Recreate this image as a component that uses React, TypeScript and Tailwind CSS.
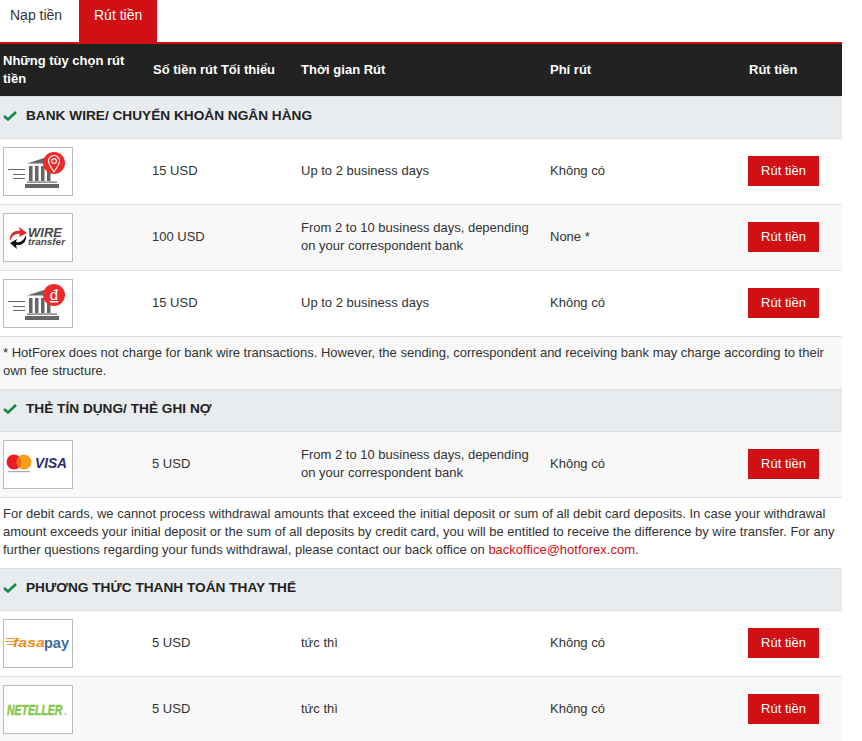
import React from "react";

const grid = "grid grid-cols-[150px_149px_249px_199px_95px] items-center";

function BankLogo({ dong }: { dong?: boolean }) {
  return (
    <svg width="68" height="47" viewBox="0 0 68 47">
      <g fill="#666">
        <rect x="4" y="21" width="17" height="1" />
        <rect x="9" y="26" width="12" height="1" />
        <rect x="9" y="30" width="12" height="1" />
        <path d="M23 15.5 L40 10 L48 15.5 Z" />
        <rect x="25" y="18" width="3.5" height="15" />
        <rect x="31" y="18" width="3.5" height="15" />
        <rect x="37" y="18" width="3.5" height="15" />
        <rect x="43" y="18" width="3.5" height="15" />
        <rect x="23" y="33.5" width="30" height="1.2" />
        <rect x="21" y="36" width="34" height="4" />
      </g>
      <circle cx="50" cy="15" r="11" fill="#ee2a2a" />
      {dong ? (
        <text x="50" y="20" textAnchor="middle" fontSize="15" fill="#fff" fontFamily="'Liberation Sans', sans-serif" textDecoration="underline">đ</text>
      ) : (
        <g fill="none" stroke="#fff" strokeWidth="1.1">
          <path d="M50 24 C47 19 44.5 16.5 44.5 13 A5.5 5.5 0 0 1 55.5 13 C55.5 16.5 53 19 50 24 Z" />
          <circle cx="50" cy="13" r="2.4" />
        </g>
      )}
    </svg>
  );
}

function WireLogo() {
  return (
    <svg width="68" height="47" viewBox="0 0 68 47">
      <path d="M6 27 C5 20 10 16 16 17 L15 13 L23 19 L15 23 L16 20 C11 19 8 22 6 27 Z" fill="#e0262b" />
      <path d="M22 21 C23 28 18 32 12 31 L13 35 L6 29 L13 25 L12 28 C17 29 20 26 22 21 Z" fill="#111" />
      <text x="24" y="23" fontSize="12.5" fontWeight="700" fontStyle="italic" fill="#4a4a4a" fontFamily="'Liberation Sans', sans-serif" textLength="34" lengthAdjust="spacingAndGlyphs">WIRE</text>
      <text x="24" y="31" fontSize="9" fontWeight="700" fontStyle="italic" fill="#4a4a4a" fontFamily="'Liberation Sans', sans-serif" textLength="37" lengthAdjust="spacingAndGlyphs">transfer</text>
    </svg>
  );
}

function VisaLogo() {
  return (
    <svg width="68" height="47" viewBox="0 0 68 47">
      <circle cx="10" cy="21" r="7.5" fill="#ea1d25" />
      <circle cx="20" cy="21" r="7.5" fill="#f79e1b" />
      <path d="M15 15.4 A7.5 7.5 0 0 1 15 26.6 A7.5 7.5 0 0 1 15 15.4 Z" fill="#f26a1f" />
      <rect x="4" y="30" width="22" height="1.2" fill="#aaa" />
      <text x="31" y="27" fontSize="14" fontWeight="700" fontStyle="italic" fill="#2b2a6b" fontFamily="'Liberation Sans', sans-serif" textLength="32" lengthAdjust="spacingAndGlyphs">VISA</text>
    </svg>
  );
}

function FasapayLogo() {
  return (
    <svg width="68" height="47" viewBox="0 0 68 47">
      <g fill="#f59a2e">
        <rect x="2" y="18" width="9" height="1" />
        <rect x="1" y="21" width="9" height="1" />
        <rect x="3" y="24" width="7" height="1" />
      </g>
      <text x="9" y="27" fontSize="12" fontWeight="700" fontStyle="italic" fill="#f08c1e" fontFamily="'Liberation Sans', sans-serif" textLength="32" lengthAdjust="spacingAndGlyphs">fasa</text>
      <text x="40" y="28" fontSize="14" fontWeight="700" fill="#3f6aa6" fontFamily="'Liberation Sans', sans-serif" textLength="25" lengthAdjust="spacingAndGlyphs">pay</text>
    </svg>
  );
}

function NetellerLogo() {
  return (
    <svg width="68" height="47" viewBox="0 0 68 47">
      <g transform="translate(3 29) scale(0.7 1)">
        <text x="0" y="0" fontSize="15" fontWeight="700" fontStyle="italic" fill="#84c94a" stroke="#84c94a" strokeWidth="0.5" fontFamily="'Liberation Sans', sans-serif">NETELLER</text>
      </g>
      <circle cx="61.5" cy="28" r="1.2" fill="#b9dfa0" />
    </svg>
  );
}

function Row({
  logo,
  min,
  time,
  fee,
  alt,
}: {
  logo: React.ReactNode;
  min: string;
  time: React.ReactNode;
  fee: string;
  alt?: boolean;
}) {
  return (
    <div className={`${grid} h-[66px] border-b border-[#ddd] ${alt ? "bg-[#f8f8f8]" : "bg-white"}`}>
      <div className="pl-[3px]">
        <div className="flex h-[49px] w-[70px] border border-[#bbb] bg-white">{logo}</div>
      </div>
      <div className="pb-[2px] pl-[2px]">{min}</div>
      <div className="pb-[2px] pl-[2px] pr-3">{time}</div>
      <div className="pb-[2px] pl-[2px]">{fee}</div>
      <div className="pb-px pl-px">
        <button className="h-[30px] w-[71px] bg-[#d11014] pb-px text-center text-[13px] text-white">Rút tiền</button>
      </div>
    </div>
  );
}

function Section({ title, first }: { title: string; first?: boolean }) {
  return (
    <div
      className={`flex items-center gap-[9px] border-b border-[#ddd] bg-[#e9ecef] pb-[4px] pl-[3px] text-[13.67px] font-bold text-[#222] ${
        first ? "h-[43px] border-t" : "h-[42px]"
      }`}
    >
      <svg width="14" height="10" viewBox="0 0 14 10">
        <path d="M1 5 L5 8.5 L13 1" fill="none" stroke="#16894a" strokeWidth="2.6" />
      </svg>
      <span>{title}</span>
    </div>
  );
}

export default function App() {
  return (
    <div className="h-[741px] w-[842px] overflow-hidden bg-white font-['Liberation_Sans',Arial,sans-serif] text-[13px] leading-[18px] text-[#333]">
      <div className="flex h-[42px] text-[14px]">
        <div className="w-[79px] pl-[10px] pt-[6px]">Nạp tiền</div>
        <div className="w-[78px] bg-[#d11014] pl-[15px] pt-[6px] text-white">Rút tiền</div>
      </div>
      <div className={`${grid} h-[54px] border-t-2 border-[#d11014] bg-[#222] font-bold text-white`}>
        <div className="pl-[3px] pr-4">Những tùy chọn rút tiền</div>
        <div className="pl-[3px]">Số tiền rút Tối thiểu</div>
        <div className="pl-[2px]">Thời gian Rút</div>
        <div className="pl-[2px]">Phí rút</div>
        <div className="pl-[2px]">Rút tiền</div>
      </div>
      <Section first title="BANK WIRE/ CHUYỂN KHOẢN NGÂN HÀNG" />
      <Row logo={<BankLogo />} min="15 USD" time="Up to 2 business days" fee="Không có" />
      <Row
        alt
        logo={<WireLogo />}
        min="100 USD"
        time="From 2 to 10 business days, depending on your correspondent bank"
        fee="None *"
      />
      <Row logo={<BankLogo dong />} min="15 USD" time="Up to 2 business days" fee="Không có" />
      <div className="h-[53px] border-b border-[#ddd] bg-[#f8f8f8] px-[3px] pt-[7px]">
        * HotForex does not charge for bank wire transactions. However, the sending, correspondent and receiving bank may charge according to their own fee structure.
      </div>
      <Section title="THẺ TÍN DỤNG/ THẺ GHI NỢ" />
      <Row
        alt
        logo={<VisaLogo />}
        min="5 USD"
        time="From 2 to 10 business days, depending on your correspondent bank"
        fee="Không có"
      />
      <div className="h-[71px] border-b border-[#ddd] bg-white px-[3px] pt-[7px]">
        For debit cards, we cannot process withdrawal amounts that exceed the initial deposit or sum of all debit card deposits. In case your withdrawal amount exceeds your initial deposit or the sum of all deposits by credit card, you will be entitled to receive the difference by wire transfer. For any further questions regarding your funds withdrawal, please contact our back office on <span className="text-[#d11014]">backoffice@hotforex.com</span>.
      </div>
      <Section title="PHƯƠNG THỨC THANH TOÁN THAY THẾ" />
      <Row logo={<FasapayLogo />} min="5 USD" time="tức thì" fee="Không có" />
      <Row alt logo={<NetellerLogo />} min="5 USD" time="tức thì" fee="Không có" />
    </div>
  );
}
